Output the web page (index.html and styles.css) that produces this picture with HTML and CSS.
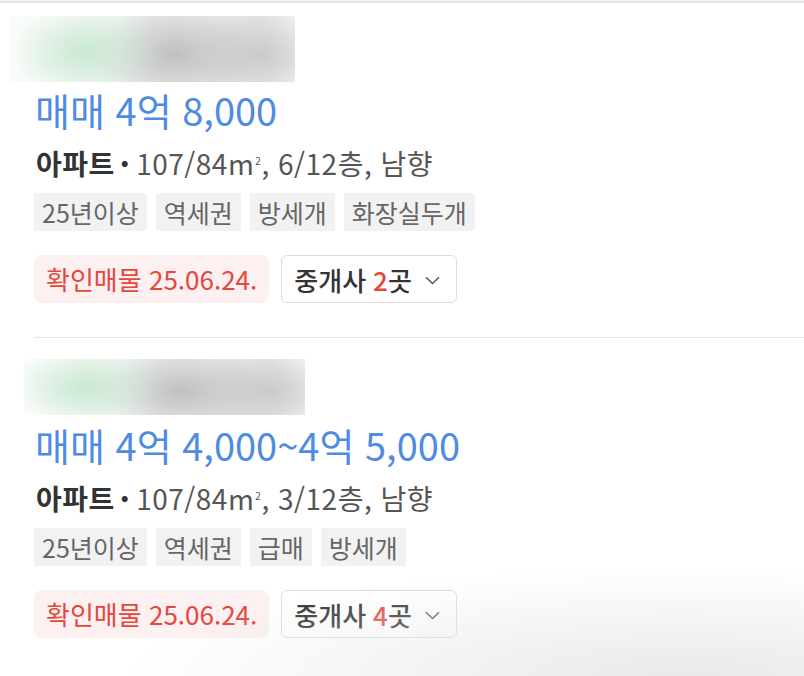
FILE: index.html
```html
<!DOCTYPE html>
<html lang="ko">
<head>
<meta charset="utf-8">
<link rel="stylesheet" href="styles.css">
</head>
<body>
<div class="page">
  <div class="topline"></div>
  <div class="item item-first">
    <div class="blur blur-a"></div>
    <div class="price">매매 4억 8,000</div>
    <div class="spec"><b>아파트</b><span class="dot">·</span>107/84m<sup>2</sup>, 6/12층, 남향</div>
    <div class="tags">
      <span class="tag">25년이상</span>
      <span class="tag">역세권</span>
      <span class="tag">방세개</span>
      <span class="tag">화장실두개</span>
    </div>
    <div class="actions">
      <span class="confirm">확인매물 25.06.24.</span>
      <span class="agent">중개사 <em>2</em>곳<svg class="chev" width="15" height="9" viewBox="0 0 15 9"><path d="M1 1.2l6.5 6.3 6.5-6.3" fill="none" stroke="#555" stroke-width="1.5"/></svg></span>
    </div>
  </div>
  <div class="divider"></div>
  <div class="item item-second">
    <div class="blur blur-b"></div>
    <div class="price">매매 4억 4,000~4억 5,000</div>
    <div class="spec"><b>아파트</b><span class="dot">·</span>107/84m<sup>2</sup>, 3/12층, 남향</div>
    <div class="tags">
      <span class="tag">25년이상</span>
      <span class="tag">역세권</span>
      <span class="tag">급매</span>
      <span class="tag">방세개</span>
    </div>
    <div class="actions">
      <span class="confirm">확인매물 25.06.24.</span>
      <span class="agent">중개사 <em>4</em>곳<svg class="chev" width="15" height="9" viewBox="0 0 15 9"><path d="M1 1.2l6.5 6.3 6.5-6.3" fill="none" stroke="#555" stroke-width="1.5"/></svg></span>
    </div>
  </div>
  <div class="shade"></div>
</div>
</body>
</html>
```
FILE: styles.css
```css
* { box-sizing: border-box; }
html, body { margin: 0; padding: 0; background: #fff; }
body { width: 804px; height: 676px; overflow: hidden; font-family: "Noto Sans CJK KR", "Noto Sans", sans-serif; }
.page { position: relative; width: 804px; height: 676px; }
.topline { height: 3px; border-top: 1px solid #f6f6f6; background: #e6e6e6; }

.item { padding-left: 34px; }
.item-first { padding-top: 13px; }
.item-second { padding-top: 21px; }

.blur { position: relative; overflow: hidden; }
.blur-a { width: 285px; height: 66px; margin-left: -24px; background:
  radial-gradient(ellipse 75px 45px at 75px 36px, rgba(200,232,210,1), rgba(222,240,228,0) 100%),
  radial-gradient(ellipse 85px 50px at 165px 38px, rgba(192,192,192,1), rgba(210,210,210,0) 100%),
  radial-gradient(ellipse 75px 50px at 250px 38px, rgba(202,202,202,1), rgba(212,212,212,0) 100%),
  linear-gradient(90deg, #fafcfa 0%, #f2f6f3 35%, #ebebeb 50%, #e8e8e8 88%, #f6f6f6 100%); }
.blur-b { width: 281px; height: 56px; margin-left: -10px; background:
  radial-gradient(ellipse 75px 40px at 62px 28px, rgba(200,232,210,1), rgba(222,240,228,0) 100%),
  radial-gradient(ellipse 85px 45px at 158px 32px, rgba(192,192,192,1), rgba(210,210,210,0) 100%),
  radial-gradient(ellipse 75px 45px at 245px 32px, rgba(202,202,202,1), rgba(212,212,212,0) 100%),
  linear-gradient(90deg, #fafcfa 0%, #f2f6f3 35%, #ebebeb 50%, #e8e8e8 88%, #f6f6f6 100%); }

.price { margin-top: 8px; font-size: 38px; line-height: 44px; color: #4f8be3; font-weight: 400; margin-left: 1px; white-space: nowrap; }
.item-first .price { margin-top: 6px; }
.spec { margin-top: 14px; font-size: 28px; line-height: 34px; color: #555; letter-spacing: 0.5px; margin-left: 2px; white-space: nowrap; }
.spec b { color: #333; font-weight: 700; }
.spec .dot { font-weight: 900; color: #333; margin: 0 6px 0 5px; }
.spec sup { font-size: 10px; vertical-align: top; position: relative; top: -2px; margin-left: 1px; }

.tags { display: flex; gap: 9px; margin-top: 13px; }
.tag { background: #f2f2f2; color: #666; font-size: 25px; line-height: 38px; height: 38px; padding: 0 8px; white-space: nowrap; }

.actions { display: flex; gap: 12px; margin-top: 24px; align-items: center; }
.confirm { background: #fdf0f0; color: #e5473d; font-size: 26px; height: 48px; line-height: 48px; padding: 0 12px; border-radius: 8px; white-space: nowrap; }
.agent { display: flex; align-items: center; border: 1px solid #dcdcdc; border-radius: 6px; height: 48px; padding: 0 16px 0 12px; font-size: 26px; color: #333; font-weight: 500; background: #fff; white-space: nowrap; }
.agent em { font-style: normal; color: #e5473d; margin-left: 7px; }
.chev { margin-left: 13px; margin-top: 2px; }

.divider { margin: 34px 0 0 34px; height: 1px; background: #e4e4e4; }

.shade { position: absolute; left: 0; right: 0; bottom: 0; height: 110px; pointer-events: none;
  background: radial-gradient(ellipse 560px 110px at 85% 100%, rgba(232,232,232,0.95), rgba(240,240,240,0) 100%); }
```
